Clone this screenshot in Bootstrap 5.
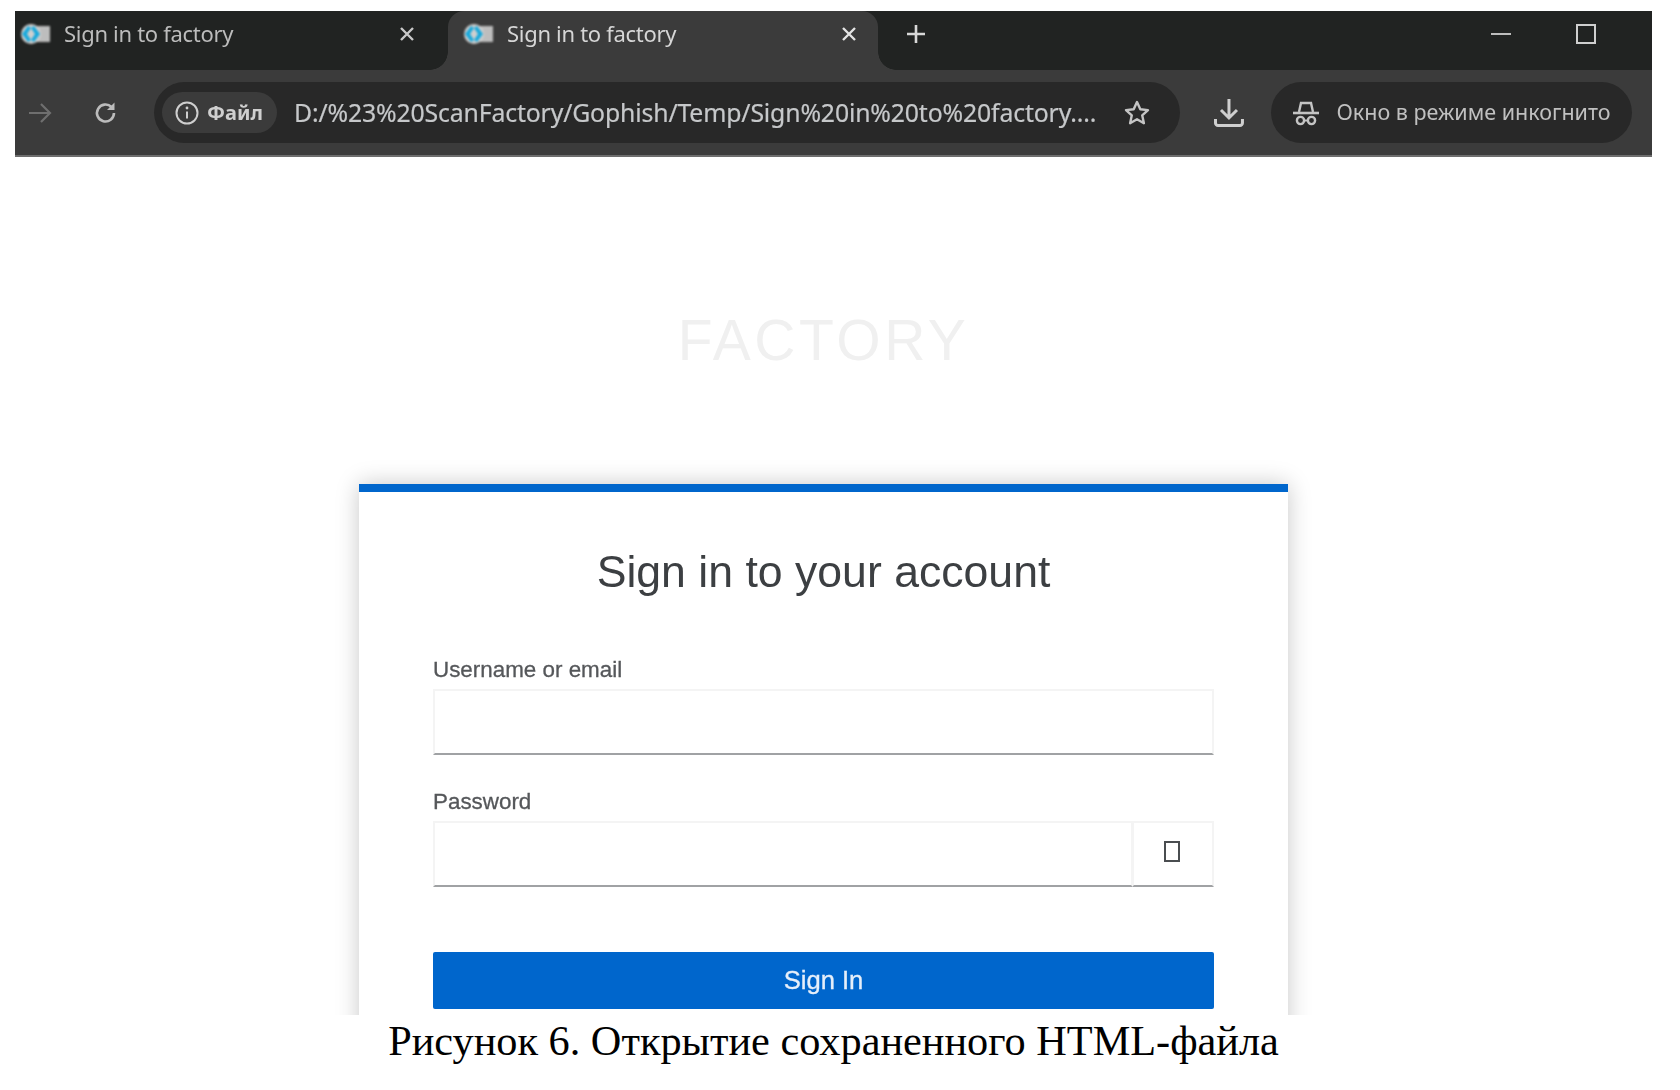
<!DOCTYPE html>
<html lang="ru">
<head>
    <meta charset="UTF-8">
    <meta name="viewport" content="width=device-width, initial-scale=1.0">
    <title>Sign in to factory</title>
    <link href="https://cdn.jsdelivr.net/npm/bootstrap@5.3.0/dist/css/bootstrap.min.css" rel="stylesheet">
    <style>
        body { background: #fff; overflow: hidden; }
        .shot { padding: 11px 28px 0 15px; }

        /* browser chrome */
        .chrome { font-family: "Noto Sans", sans-serif; color: #bcbcbc; filter: blur(.6px); }
        .tabstrip { height: 59px; background: #212322; }
        .tab-item { width: 433px; height: 59px; padding: 0 32px 14px 2px; font-size: 22px; position: relative; }
        .tab-item + .tab-item { width: 430px; padding-left: 12px; padding-right: 20px; }
        .tab-item.is-active { background: #3b3b3b; border-radius: 16px 16px 0 0; color: #d6d6d6; }
        .tab-item.is-active::before, .tab-item.is-active::after { content: ""; position: absolute; bottom: 0; width: 18px; height: 18px; }
        .tab-item.is-active::before { left: -18px; background: radial-gradient(circle at 0 0, transparent 17.5px, #3b3b3b 18px); }
        .tab-item.is-active::after { right: -18px; background: radial-gradient(circle at 100% 0, transparent 17.5px, #3b3b3b 18px); }
        .tab-title { margin-left: 13px; flex: 1; letter-spacing: -.3px; }
        .fav-mark { filter: blur(.8px); }
        .tab-plus { margin-left: 27px; margin-bottom: 14px; }
        .win-btns { margin-bottom: 14px; }
        .toolbar { height: 87px; background: #3b3b3b; padding: 13px 20px 13px 13px; border-bottom: 2px solid #6d6d6d; }
        .pill-dark { background: #282828; border-radius: 31px; height: 61px; }
        .addr-pill { width: 1027px; padding: 0 29px 0 8px; margin-left: 35px; }
        .file-chip { background: #3b3b3b; border-radius: 21px; width: 115px; height: 41px; padding-left: 12px; gap: 7px; font-size: 20px; font-weight: 700; color: #cfcfcf; flex: none; }
        .url-text { margin-left: 17px; font-size: 24.8px; letter-spacing: -.15px; color: #c6c8ca; white-space: nowrap; -webkit-text-stroke: .2px #c6c8ca; }
        .incog-pill { width: 361px; padding-left: 22px; gap: 17px; font-size: 21.5px; color: #c0c0c0; margin-left: 27px; }

        /* page below the chrome */
        .page-area { height: 858px; overflow: hidden; padding-right: 20px; }
        .brand-word { font-family: "Liberation Sans", sans-serif; font-size: 57px; line-height: 62px; letter-spacing: 3.5px; color: #f0f0f0; padding-top: 152px; height: 327px; text-align: center; filter: blur(.6px); }
        .login-box { width: 929px; height: 600px; border: 0; border-radius: 0; border-top: 8px solid #0066cc; box-shadow: 0 0 22px rgba(0,0,0,.22); padding: 0 74px; font-family: "Liberation Sans", sans-serif; filter: blur(.4px); }
        .login-title { font-size: 44.6px; font-weight: 400; line-height: 48px; color: #3c3f42; margin: 56px 0 0; text-align: center; }
        .field-label { font-size: 22.4px; line-height: 26px; color: #55575a; margin: 0 0 6px; -webkit-text-stroke: .3px #55575a; }
        .user-field { margin-top: 61px; }
        .pass-field { margin-top: 34px; }
        .field-input { height: 66px; border: 2px solid #f4f4f4; border-bottom: 2px solid #a0a2a4; border-radius: 0; box-shadow: none; }
        .eye-btn { width: 82px; height: 66px; border: 2px solid #f4f4f4; border-bottom: 2px solid #a0a2a4; border-radius: 0; background: #fff; padding: 0 3px 5px 0; margin-left: -2px; }
        .signin-btn { height: 57px; margin-top: 65px; background: #0066cc; border: 0; border-radius: 2px; font-size: 25.6px; color: #e6effa; -webkit-text-stroke: .3px #e6effa; }
        .fig-caption { font-family: "Liberation Serif", serif; font-size: 42.3px; line-height: 50px; color: #000; text-align: center; margin-top: 1px; }
    </style>
</head>
<body>
    <div class="shot">
        <div class="chrome">
            <div class="tabstrip d-flex align-items-center">
                <div class="tab-item d-flex align-items-center">
                    <svg class="fav-mark" width="34" height="24" viewBox="0 0 34 24"><rect x="8" y="4" width="25" height="16" fill="#bdbdbd"/><circle cx="14" cy="12" r="10" fill="#cfcfcf"/><path d="M11 4 5 12l6 8 3-2-4-6 4-6zM17 4l6 8-6 8-3-2 4-6-4-6z" fill="#18a9dc"/></svg>
                    <span class="tab-title">Sign in to factory</span>
                    <svg width="18" height="18" viewBox="0 0 18 18"><path d="M3 3l12 12M15 3 3 15" stroke="#c9c9c9" stroke-width="2.4"/></svg>
                </div>
                <div class="tab-item is-active d-flex align-items-center">
                    <svg class="fav-mark" width="34" height="24" viewBox="0 0 34 24"><rect x="8" y="4" width="25" height="16" fill="#bdbdbd"/><circle cx="14" cy="12" r="10" fill="#cfcfcf"/><path d="M11 4 5 12l6 8 3-2-4-6 4-6zM17 4l6 8-6 8-3-2 4-6-4-6z" fill="#18a9dc"/></svg>
                    <span class="tab-title">Sign in to factory</span>
                    <svg width="18" height="18" viewBox="0 0 18 18"><path d="M3 3l12 12M15 3 3 15" stroke="#e4e4e4" stroke-width="2.4"/></svg>
                </div>
                <svg class="tab-plus" width="22" height="22" viewBox="0 0 22 22"><path d="M11 2v18M2 11h18" stroke="#d8d8d8" stroke-width="2.6"/></svg>
                <div class="win-btns ms-auto d-flex align-items-center">
                    <svg width="20" height="20" viewBox="0 0 20 20"><path d="M0 10h20" stroke="#bdbdbd" stroke-width="2"/></svg>
                    <svg width="20" height="20" viewBox="0 0 20 20" style="margin-left:65px"><rect x="1" y="1" width="18" height="18" fill="none" stroke="#cfcfcf" stroke-width="2"/></svg>
                </div>
                <div style="width:56px"></div>
            </div>
            <div class="toolbar d-flex align-items-center">
                <svg width="24" height="22" viewBox="0 0 24 22"><path d="M1 11h21M13 2l9 9-9 9" fill="none" stroke="#6f6f6f" stroke-width="2.2"/></svg>
                <svg width="26" height="26" viewBox="0 0 26 26" style="margin-left:41px"><path d="M21 13a8.500 8.500 0 1 1-2.500-6" fill="none" stroke="#bcbcbc" stroke-width="2.600"/><path d="M21.500 2.500v7.500h-7.500z" fill="#bcbcbc"/></svg>
                <div class="pill-dark addr-pill d-flex align-items-center">
                    <div class="file-chip d-flex align-items-center">
                        <svg width="26" height="26" viewBox="0 0 26 26"><circle cx="13" cy="13" r="10.500" fill="none" stroke="#cfcfcf" stroke-width="2"/><path d="M13 11.500v7" stroke="#cfcfcf" stroke-width="2"/><circle cx="13" cy="8" r="1.400" fill="#cfcfcf"/></svg>
                        <span>Файл</span>
                    </div>
                    <span class="url-text">D:/%23%20ScanFactory/Gophish/Temp/Sign%20in%20to%20factory....</span>
                    <svg class="ms-auto" width="28" height="28" viewBox="0 0 28 28"><path d="M14 3l3.300 7.300 7.700.8-5.800 5.200 1.700 7.900-6.900-4-6.900 4 1.700-7.900L3 11.100l7.700-.8z" fill="none" stroke="#c4c4c4" stroke-width="2.400" stroke-linejoin="round"/></svg>
                </div>
                <svg width="32" height="32" viewBox="0 0 32 32" style="margin-left:33px"><path d="M16 2v19M8 13l8 8 8-8" fill="none" stroke="#cfcfcf" stroke-width="3"/><path d="M2.500 22v4a2.500 2.500 0 0 0 2.500 2.500h22a2.500 2.500 0 0 0 2.500-2.500v-4" fill="none" stroke="#cfcfcf" stroke-width="3"/></svg>
                <div class="pill-dark incog-pill d-flex align-items-center">
                    <svg width="26" height="28" viewBox="0 0 26 28"><path d="M6 13l2-9h10l2 9" fill="none" stroke="#c4c4c4" stroke-width="2.400"/><path d="M0 14h26" stroke="#c4c4c4" stroke-width="2.600"/><circle cx="7.500" cy="21.500" r="3.600" fill="none" stroke="#c4c4c4" stroke-width="2.400"/><circle cx="18.500" cy="21.500" r="3.600" fill="none" stroke="#c4c4c4" stroke-width="2.400"/><path d="M11 21.500h4" stroke="#c4c4c4" stroke-width="2"/></svg>
                    <span>Окно в режиме инкогнито</span>
                </div>
            </div>
        </div>

        <div class="page-area">
            <div class="brand-word">FACTORY</div>
            <div class="card login-box mx-auto">
                <h1 class="login-title">Sign in to your account</h1>
                <form>
                    <div class="user-field">
                        <label class="field-label d-block" for="username">Username or email</label>
                        <input class="form-control field-input" id="username" type="text">
                    </div>
                    <div class="pass-field">
                        <label class="field-label d-block" for="password">Password</label>
                        <div class="input-group">
                            <input class="form-control field-input" id="password" type="password">
                            <button class="btn eye-btn d-flex align-items-center justify-content-center" type="button" aria-label="Show password">
                                <svg width="16" height="21" viewBox="0 0 16 21"><rect x="1" y="1" width="14" height="19" fill="none" stroke="#4a4d50" stroke-width="2"/></svg>
                            </button>
                        </div>
                    </div>
                    <button class="btn btn-primary w-100 signin-btn" type="button">Sign In</button>
                </form>
            </div>
        </div>
        <div class="fig-caption">Рисунок 6. Открытие сохраненного HTML-файла</div>
    </div>
    <script src="https://cdn.jsdelivr.net/npm/bootstrap@5.3.0/dist/js/bootstrap.bundle.min.js"></script>
</body>
</html>
